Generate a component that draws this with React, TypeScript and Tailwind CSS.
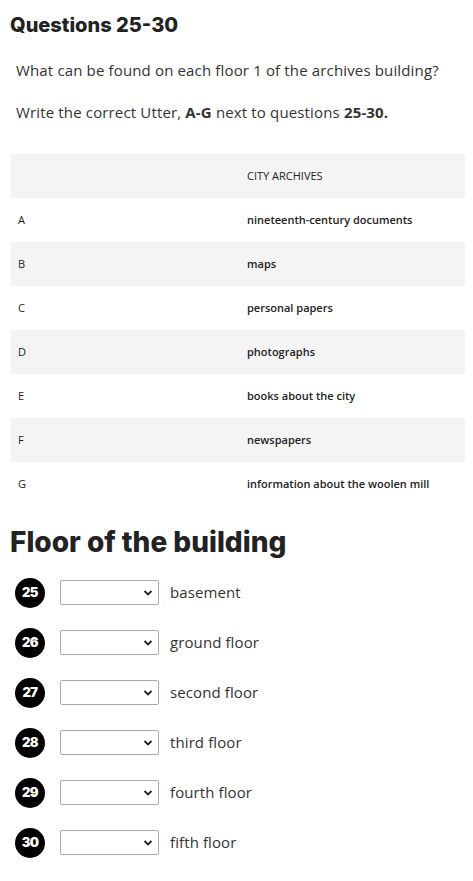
import React from "react";

const rows: [string, string][] = [
  ["A", "nineteenth-century documents"],
  ["B", "maps"],
  ["C", "personal papers"],
  ["D", "photographs"],
  ["E", "books about the city"],
  ["F", "newspapers"],
  ["G", "information about the woolen mill"],
];

const floors: [string, string][] = [
  ["25", "basement"],
  ["26", "ground floor"],
  ["27", "second floor"],
  ["28", "third floor"],
  ["29", "fourth floor"],
  ["30", "fifth floor"],
];

const body = { fontFamily: "'Open Sans', 'Noto Sans', sans-serif" };
const head = { fontFamily: "Inter, 'Noto Sans', sans-serif" };

export default function App() {
  return (
    <div className="w-[473px] bg-white text-[#333]" style={body}>
      <h2 className="pl-[10px] pt-[11px] text-[20px] font-extrabold leading-[28px] text-[#222]" style={head}>
        Questions 25-30
      </h2>
      <p className="mt-[21px] pl-[16px] text-[15px] leading-[20px] tracking-[0.15px] text-[#333]">
        What can be found on each floor 1 of the archives building?
      </p>
      <p className="mt-[22px] pl-[16px] text-[15px] leading-[20px] tracking-[0.15px] text-[#333]">
        Write the correct Utter, <b>A-G</b> next to questions <b>25-30.</b>
      </p>
      <div className="mx-[10px] mt-[32px] w-[455px]">
        <div className="flex h-[44px] items-center bg-[#f4f4f4] text-[11px] text-[#222]">
          <div className="w-[237px]" />
          <div>CITY ARCHIVES</div>
        </div>
        {rows.map(([l, t], i) => (
          <div
            key={l}
            className={`flex h-[44px] items-center text-[11px] ${i % 2 === 1 ? "bg-[#f4f4f4]" : "bg-white"}`}
          >
            <div className="w-[237px] pl-[8px] text-[#222]">{l}</div>
            <div className="font-semibold text-[#222]">{t}</div>
          </div>
        ))}
      </div>
      <h2 className="mt-[20px] pl-[10px] text-[28px] font-extrabold leading-[32px] text-[#222]" style={head}>
        Floor of the building
      </h2>
      <div className="mt-[22px] flex flex-col gap-[25px] pb-[26px]">
        {floors.map(([n, label]) => (
          <div key={n} className="flex h-[25px] items-center">
            <div className="ml-[15px] flex h-[30px] w-[30px] items-center justify-center rounded-full bg-black text-[13px] font-black tracking-[-0.6px] text-white" style={head}>
              {n}
            </div>
            <div className="relative ml-[15px] h-[25px] w-[99px] rounded-[2px] border border-[#aaa] bg-white">
              <svg className="absolute right-[5px] top-[8px]" width="10" height="8" viewBox="0 0 10 8">
                <path d="M1.5 2 L5 5.5 L8.5 2" fill="none" stroke="#222" strokeWidth="1.8" />
              </svg>
            </div>
            <span className="ml-[11px] text-[15px] tracking-[0.1px] text-[#333]">{label}</span>
          </div>
        ))}
      </div>
    </div>
  );
}
